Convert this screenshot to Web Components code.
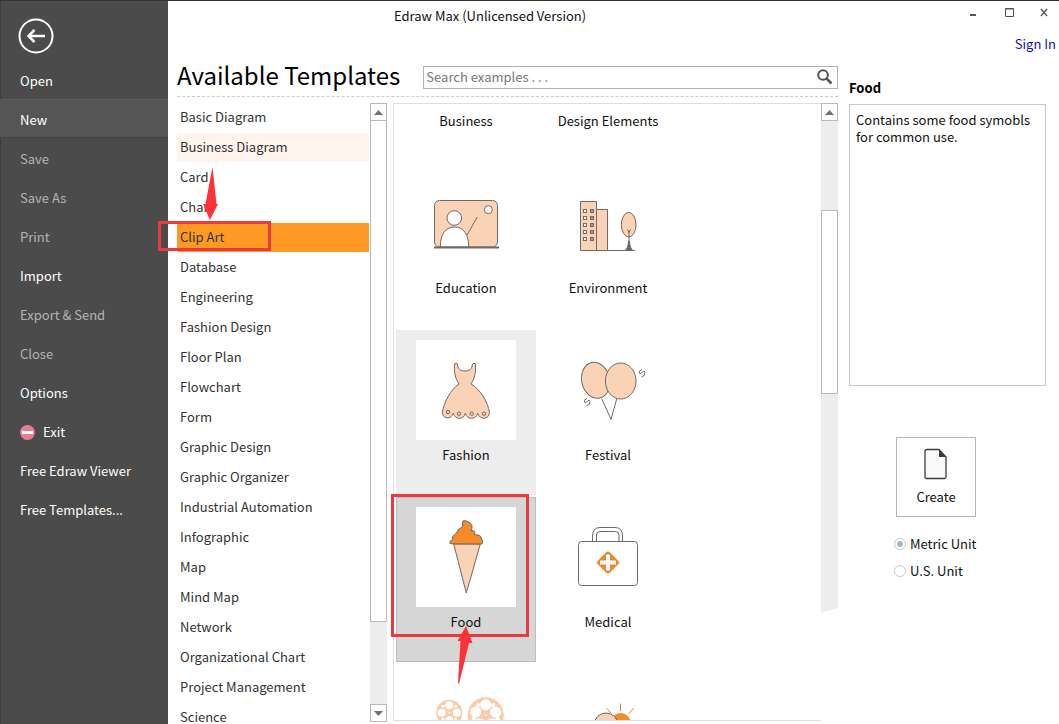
<!DOCTYPE html>
<html lang="en">
<head>
<meta charset="utf-8">
<title>Edraw Max (Unlicensed Version)</title>
<style>
	body { margin: 0; font: 13px/18px "Noto Sans CJK SC", "Noto Sans", sans-serif; color: #111; background: #fff; }
</style>
</head>
<body>
<edraw-app></edraw-app>

<script>
const define = (name, html, setup) => {
	const template = document.createElement("template");
	template.innerHTML = html;
	customElements.define(name, class extends HTMLElement {
		constructor() {
			super();
			this.sr = this.attachShadow({ mode: "open" });
			this.sr.append(template.content.cloneNode(true));
		}
		connectedCallback() {
			setup && setup(this.sr, this);
		}
	});
};

const reset = `
	* { box-sizing: border-box; }
	button, input { font: inherit; color: inherit; margin: 0; }
	button { background: none; border: 0; padding: 0; cursor: pointer; }
	svg { display: block; }
`;

const reel = (cx, cy, r, count) => {
	const dot = (turn, distance, size) => {
		const a = (turn / count * 360 - 90) * Math.PI / 180;
		return `<circle cx="${cx + Math.cos(a) * r * distance}" cy="${cy + Math.sin(a) * r * distance}" r="${r * size}" fill="#fff"/>`;
	};
	let holes = "";
	for (let i = 0; i < count; i++) {
		holes += dot(i, .58, .31) + dot(i + .5, .7, .12);
	}
	return `<circle cx="${cx}" cy="${cy}" r="${r}" fill="#f9cba8"/>${holes}<circle cx="${cx}" cy="${cy}" r="1" fill="#fff"/>`;
};

const windows = () => {
	let out = "";
	for (let y = 36.5; y < 70; y += 7) {
		out += `<rect x="25.5" y="${y}" width="3" height="3" fill="#fff"/><rect x="32.5" y="${y}" width="3" height="3" fill="#c98f68"/>`;
	}
	return out;
};

const squiggle = "M29 58.5Q25 60 26.5 62.2Q28 63.5 29.5 61Q31.500 59 32 61.500Q32.200 65 28.500 66";

const pictures = {
	education: `
		<rect x="18.5" y="27.5" width="63" height="46.5" rx="5"/>
		<circle cx="72.3" cy="36.7" r="4" fill="#fff"/>
		<path d="M61.3 44 51 62"/>
		<path d="M24.3 74C24.3 62 29 54 38.5 54S52.7 62 52.7 74Z" fill="#fff"/>
		<circle cx="38.3" cy="45" r="7.3" fill="#fff"/>
		<path d="M18 74.5H83" stroke-width="2"/>`,
	environment: `
		<path d="M22.5 77.5v-49H38.5v49ZM38.5 77.5v-41H49.5v41ZM49.5 77.5H77"/>
		${windows()}
		<ellipse cx="70.7" cy="51.7" rx="7.3" ry="12.3"/>
		<path d="M69.5 56.5 71 59.5 72.5 56.5M71 58V72" />
		<path d="M70.6 68Q70 76 67 77.5H75Q72 76 71.4 68Z" fill="#666"/>`,
	fashion: `
		<path d="M38.5 24Q40 22.5 41.5 24C41.5 29 44.5 31 49 31S56 29 56.5 24Q58 22.5 59.5 24C60 32 59 38 55 44C64 49 72 62 73.5 72.5C73 80 63.5 80 61.7 73.3C60 80 51 80 49.3 73.3C48 80 39 80 37.3 73.3C35 80 26.5 79 26.3 72.5C28 62 35 49 43 44C39 38 38 32 38.5 24Z"/>
		<circle cx="32" cy="72" r="1.7"/><circle cx="43" cy="73.7" r="1.7"/><circle cx="55.7" cy="73.7" r="1.7"/><circle cx="68" cy="73.7" r="1.7"/>`,
	festival: `
		<path d="M43.7 58.7 53 79.3 58.7 59" fill="none"/>
		<ellipse cx="37.7" cy="40.3" rx="14" ry="18.2" transform="rotate(-13 37.7 40.3)"/>
		<ellipse cx="62.7" cy="41" rx="15.3" ry="18"/>
		<path d="${squiggle}" fill="none"/>
		<path d="${squiggle}" fill="none" transform="translate(55 -29)"/>`,
	food: `
		<path d="M37.7 37 50.3 86 64.3 37Z"/>
		<path d="M34 36.7Q33 34 36.5 32.5Q36 28.5 38.5 28Q40 26.5 41 25Q41.5 22 45 21Q47.5 20 46.5 16Q46.5 13 49 13.7Q55 15 56 19Q56.5 21 55 23.5Q60 23 58.5 28Q65 27 65.5 32Q67.5 34 66 37Z" fill="#f68b28"/>`,
	medical: `
		<path d="M34.5 34.5V29Q34.5 20.5 42 20.5H57Q64.5 20.5 64.5 29V34.5M38.5 34.5V28Q38.5 24.5 42 24.5H57.5Q61 24.5 61 28V34.5" fill="none"/>
		<rect x="20.5" y="34.5" width="59" height="44" rx="3" fill="#fff"/>
		<rect x="41.5" y="47" width="17" height="17" rx="3" transform="rotate(45 50 55.5)" fill="#ed872d" stroke="none"/>
		<path d="M50 47.5V63.5M42 55.5H58" stroke="#fff" stroke-width="4"/>`,
	movie: `<g stroke="none">${reel(33.3, 38.7, 13, 4)}${reel(69.7, 41.3, 18, 5)}</g>`,
	weather: `
		<circle cx="62.7" cy="49" r="10" fill="#f68b28" stroke="none"/>
		<path d="M62.5 29.5V37M48.7 34.3 53.5 39.5M75.7 34.3 70.7 39.7" stroke="#d8843c"/>
		<circle cx="48" cy="51" r="12"/>`,
};

define("back-button", `
	<style>
		${reset}
		:host { display: block; }
		button { display: block; border-radius: 50%; }
	</style>
	<button aria-label="Back">
		<svg width="36" height="36" viewBox="0 0 36 36" fill="none" stroke="#fff" stroke-width="2">
			<circle cx="18" cy="18" r="16.5"/>
			<path d="M11 18H27" stroke-width="2.5"/><path d="M16.5 12 10.5 18 16.5 24" stroke-width="2.5"/>
		</svg>
	</button>
`);

define("menu-item", `
	<style>
		${reset}
		:host { display: block; }
		button {
			display: flex;
			align-items: center;
			gap: 8px;
			width: 100%;
			height: 39px;
			padding: 3px 20px 0;
			color: #fff;
			text-align: left;
		}
		button:disabled { color: #b4b4b4; cursor: default; }
		:host([current]) button { background: #555; box-shadow: inset 0 1px #5d5d5d, inset 0 -1px #414141; }
	</style>
	<button><slot name="icon"></slot><span><slot></slot></span></button>
`, (sr, el) => {
	sr.querySelector("button").disabled = el.hasAttribute("disabled");
});

define("side-menu", `
	<style>
		${reset}
		:host {
			display: block;
			background: #4b4b4b;
			border-left: 1px solid #3e3e3e;
		}
		back-button { padding: 17px 0 6px 17px; }
		menu-item svg { width: 15px; height: 15px; }
		nav { margin-left: -1px; }
	</style>
	<back-button></back-button>
	<nav>
		<menu-item>Open</menu-item>
		<menu-item current>New</menu-item>
		<menu-item disabled>Save</menu-item>
		<menu-item disabled>Save As</menu-item>
		<menu-item disabled>Print</menu-item>
		<menu-item>Import</menu-item>
		<menu-item disabled>Export &amp; Send</menu-item>
		<menu-item disabled>Close</menu-item>
		<menu-item>Options</menu-item>
		<menu-item>
			<svg slot="icon" viewBox="0 0 15 15"><circle cx="7.5" cy="7.5" r="7.5" fill="#e87f90"/><path d="M2 6H13V9H2Z" fill="#fff"/></svg>
			Exit
		</menu-item>
		<menu-item>Free Edraw Viewer</menu-item>
		<menu-item>Free Templates...</menu-item>
	</nav>
`);

define("title-bar", `
	<style>
		${reset}
		:host { display: block; color: #111; }
		.bar { display: flex; height: 30px; }
		.title { flex: 1; padding: 6px 0 0 226px; }
		.controls { display: flex; align-items: flex-start; gap: 23px; padding: 6px 9px 0 0; }
		.controls svg { width: 12px; height: 12px; fill: none; stroke: #555; }
		.account { display: flex; justify-content: flex-end; padding: 4px 3px 0 0; }
		a { color: #1212b0; text-decoration: none; }
	</style>
	<div class="bar">
		<span class="title">Edraw Max (Unlicensed Version)</span>
		<div class="controls">
			<button aria-label="Minimize"><svg viewBox="0 0 12 12"><path d="M2 8H8" stroke-width="2"/></svg></button>
			<button aria-label="Maximize"><svg viewBox="0 0 12 12"><path d="M2.5 1.500H10.500V9.500H2.500ZM2 2H11"/></svg></button>
			<button aria-label="Close"><svg viewBox="0 0 12 12"><path d="M3 2 9 9M9 2 3 9" stroke-width="1.3"/></svg></button>
		</div>
	</div>
	<div class="account"><a href="#">Sign In</a></div>
`);

define("search-box", `
	<style>
		${reset}
		:host { display: flex; height: 23px; border: 1px solid #b3b3b3; background: #fff; }
		input { flex: 1; min-width: 0; border: 0; padding: 0 2px; outline: 0; background: none; }
		input::placeholder { color: #777; opacity: 1; }
		button { width: 24px; padding-left: 3px; }
	</style>
	<input type="text" aria-label="Search examples" placeholder="Search examples . . .">
	<button aria-label="Search">
		<svg width="18" height="18" viewBox="0 0 18 18" fill="none" stroke="#555" stroke-width="2"><circle cx="7" cy="7" r="4.8"/><path d="M10.5 10.5 15.5 15.5" stroke-width="2.5"/></svg>
	</button>
`);

define("scroll-bar", `
	<style>
		${reset}
		:host { display: flex; flex-direction: column; width: 17px; background: #ededed; }
		button {
			display: grid;
			place-items: center;
			flex: none;
			height: 18px;
			border: 1px solid #b9b9b9;
			background: #fff;
		}
		path { fill: #707070; }
		.before { flex: var(--before, 0) 0 0; }
		.thumb { flex: var(--thumb, 1) 0 0; border: 1px solid #b9b9b9; background: #fff; }
		.after { flex: var(--after, 0) 0 0; }
		:host([top]) .thumb { border-top: 0; }
		:host([cut]) .down { display: none; }
		:host([cut]) { clip-path: polygon(0 0, 100% 0, 100% calc(100% - 5px), 0 100%); }
	</style>
	<button aria-label="Scroll up"><svg width="9" height="5"><path d="M0 5H9L4.5 0Z"/></svg></button>
	<div class="before"></div>
	<div class="thumb"></div>
	<div class="after"></div>
	<button class="down" aria-label="Scroll down"><svg width="9" height="5"><path d="M0 0H9L4.5 5Z"/></svg></button>
`);

define("category-item", `
	<style>
		${reset}
		:host { display: block; flex: none; }
		button { display: block; width: 100%; height: 29px; padding: 0 3px 1px; color: #333; text-align: left; }
		:host([hover]) button { background: #fff4ee; }
		:host([selected]) button { background: #fe9923; }
	</style>
	<button><slot></slot></button>
`);

define("category-list", `
	<style>
		${reset}
		:host { display: flex; gap: 1px; min-height: 0; }
		.items { display: flex; flex: 1; flex-direction: column; gap: 1px; overflow: hidden; }
		scroll-bar { --thumb: 501; --after: 82; }
	</style>
	<div class="items">
		<category-item>Basic Diagram</category-item>
		<category-item hover>Business Diagram</category-item>
		<category-item>Card</category-item>
		<category-item>Chart</category-item>
		<category-item selected>Clip Art</category-item>
		<category-item>Database</category-item>
		<category-item>Engineering</category-item>
		<category-item>Fashion Design</category-item>
		<category-item>Floor Plan</category-item>
		<category-item>Flowchart</category-item>
		<category-item>Form</category-item>
		<category-item>Graphic Design</category-item>
		<category-item>Graphic Organizer</category-item>
		<category-item>Industrial Automation</category-item>
		<category-item>Infographic</category-item>
		<category-item>Map</category-item>
		<category-item>Mind Map</category-item>
		<category-item>Network</category-item>
		<category-item>Organizational Chart</category-item>
		<category-item>Project Management</category-item>
		<category-item>Science</category-item>
	</div>
	<scroll-bar top></scroll-bar>
`);

define("template-card", `
	<style>
		${reset}
		:host { display: block; height: 165px; }
		button {
			display: flex;
			flex-direction: column;
			align-items: center;
			gap: 6px;
			width: 100%;
			height: 100%;
			padding-top: 10px;
			border: 0;
		}
		svg { flex: none; width: 100px; height: 100px; background: #fff; fill: #fad3b6; stroke: #6f6a66; }
		:host([hover]) button { background: #ededed; }
		:host([selected]) button { background: #d6d6d6; box-shadow: inset 0 0 0 1px #bdbdbd; }
		:host(:not([picture])) { height: 57px; }
		:host(:not([picture])) button { padding-top: 8px; }
		:host(:not([picture])) svg { display: none; }
	</style>
	<button><svg viewBox="0 0 100 100"></svg><span><slot></slot></span></button>
`, (sr, el) => {
	sr.querySelector("svg").innerHTML = pictures[el.getAttribute("picture")] || "";
});

define("template-gallery", `
	<style>
		${reset}
		:host { display: flex; align-items: flex-start; min-height: 0; }
		.view {
			display: grid;
			grid-template-columns: 140px 140px;
			align-content: start;
			flex: 1;
			gap: 2px;
			height: calc(100% - 1px);
			padding-left: 2px;
			overflow: hidden;
			border: 1px solid #dedede;
			border-right: 0;
		}
		scroll-bar { height: calc(100% - 109px); --before: 89; --thumb: 183; --after: 219; }
	</style>
	<div class="view">
		<template-card>Business</template-card>
		<template-card>Design Elements</template-card>
		<template-card picture="education">Education</template-card>
		<template-card picture="environment">Environment</template-card>
		<template-card picture="fashion" hover>Fashion</template-card>
		<template-card picture="festival">Festival</template-card>
		<template-card picture="food" selected>Food</template-card>
		<template-card picture="medical">Medical</template-card>
		<template-card picture="movie"></template-card>
		<template-card picture="weather"></template-card>
	</div>
	<scroll-bar cut></scroll-bar>
`);

define("template-details", `
	<style>
		${reset}
		:host { display: flex; flex-direction: column; }
		h2 { margin: 0 0 7px; font-size: 13px; line-height: 18px; color: #000; }
		p { height: 282px; margin: 0; padding: 6px; border: 1px solid #c9c9c9; line-height: 17px; }
		.create {
			display: flex;
			flex-direction: column;
			align-items: center;
			gap: 8px;
			width: 80px;
			height: 80px;
			margin: 51px 0 18px 47px;
			padding-top: 10px;
			border: 1px solid #b5b5b5;
		}
		fieldset { display: grid; gap: 9px; margin: 0 0 0 45px; padding: 0; border: 0; }
		label { display: flex; align-items: center; gap: 4px; }
		input {
			appearance: none;
			display: grid;
			place-items: center;
			width: 12px;
			height: 12px;
			border: 1px solid #c4c9cc;
			border-radius: 50%;
		}
		input:checked::after { content: ""; width: 6px; height: 6px; border-radius: 50%; background: #b5b5b5; }
	</style>
	<h2>Food</h2>
	<p>Contains some food symobls for common use.</p>
	<button class="create">
		<svg width="24" height="32" viewBox="0 0 24 32"><path d="M3 1.5H15L22 9V29Q22 30.5 20.5 30.5H2.5Q1 30.5 1 29V3Q1 1.5 3 1.5Z" fill="#fafafa" stroke="#3c3c3c" stroke-width="1.3"/><path d="M15 1.5V9H22Z" fill="#3c3c3c"/></svg>
		Create
	</button>
	<fieldset aria-label="Units">
		<label><input type="radio" name="unit" checked>Metric Unit</label>
		<label><input type="radio" name="unit">U.S. Unit</label>
	</fieldset>
`);

// Red frames and arrows drawn over the window
define("tutorial-marks", `
	<style>
		:host { position: absolute; inset: 0; pointer-events: none; }
		svg { display: block; width: 100%; height: 100%; }
	</style>
	<svg fill="none" stroke="#e93b3f" stroke-width="3" aria-hidden="true">
		<rect x="159.5" y="221.5" width="110" height="27"/>
		<rect x="392.5" y="494.5" width="135" height="140"/>
		<path d="M212.500 166 216.500 203H218L210 219 203 203H205.500Z" fill="#fd3238" stroke="none"/>
		<path d="M466 625 472.500 642H469L459 683 458 682 460.500 640H457.500Z" fill="#fd3238" stroke="none"/>
	</svg>
`);

define("edraw-app", `
	<style>
		${reset}
		:host {
			position: relative;
			display: grid;
			grid-template-columns: 168px minmax(0, 1fr);
			height: 100vh;
			box-sizing: border-box;
			overflow: hidden;
			border-top: 1px solid #333;
		}
		main { display: flex; flex-direction: column; min-height: 0; }
		.content {
			display: grid;
			grid-template-columns: minmax(0, 1fr) 197px;
			flex: 1;
			gap: 11px;
			min-height: 0;
			padding: 7px 13px 2px 9px;
		}
		.browser { display: flex; flex-direction: column; min-height: 0; }
		header {
			display: flex;
			align-items: center;
			gap: 23px;
			height: 37px;
			margin-bottom: 6px;
			padding-bottom: 2px;
			border-bottom: 1px dashed #ccc;
		}
		h1 { margin: 0; padding-bottom: 4px; font-size: 24px; line-height: 32px; font-weight: 400; color: #000; }
		search-box { flex: 1; }
		.panes { display: grid; grid-template-columns: 210px minmax(0, 1fr); grid-template-rows: minmax(0, 1fr); flex: 1; gap: 6px; min-height: 0; }
		template-details { padding-top: 19px; }
	</style>
	<side-menu></side-menu>
	<main>
		<title-bar></title-bar>
		<div class="content">
			<div class="browser">
				<header>
					<h1>Available Templates</h1>
					<search-box></search-box>
				</header>
				<div class="panes">
					<category-list></category-list>
					<template-gallery></template-gallery>
				</div>
			</div>
			<template-details></template-details>
		</div>
	</main>
	<tutorial-marks></tutorial-marks>
`);
</script>
</body>
</html>
